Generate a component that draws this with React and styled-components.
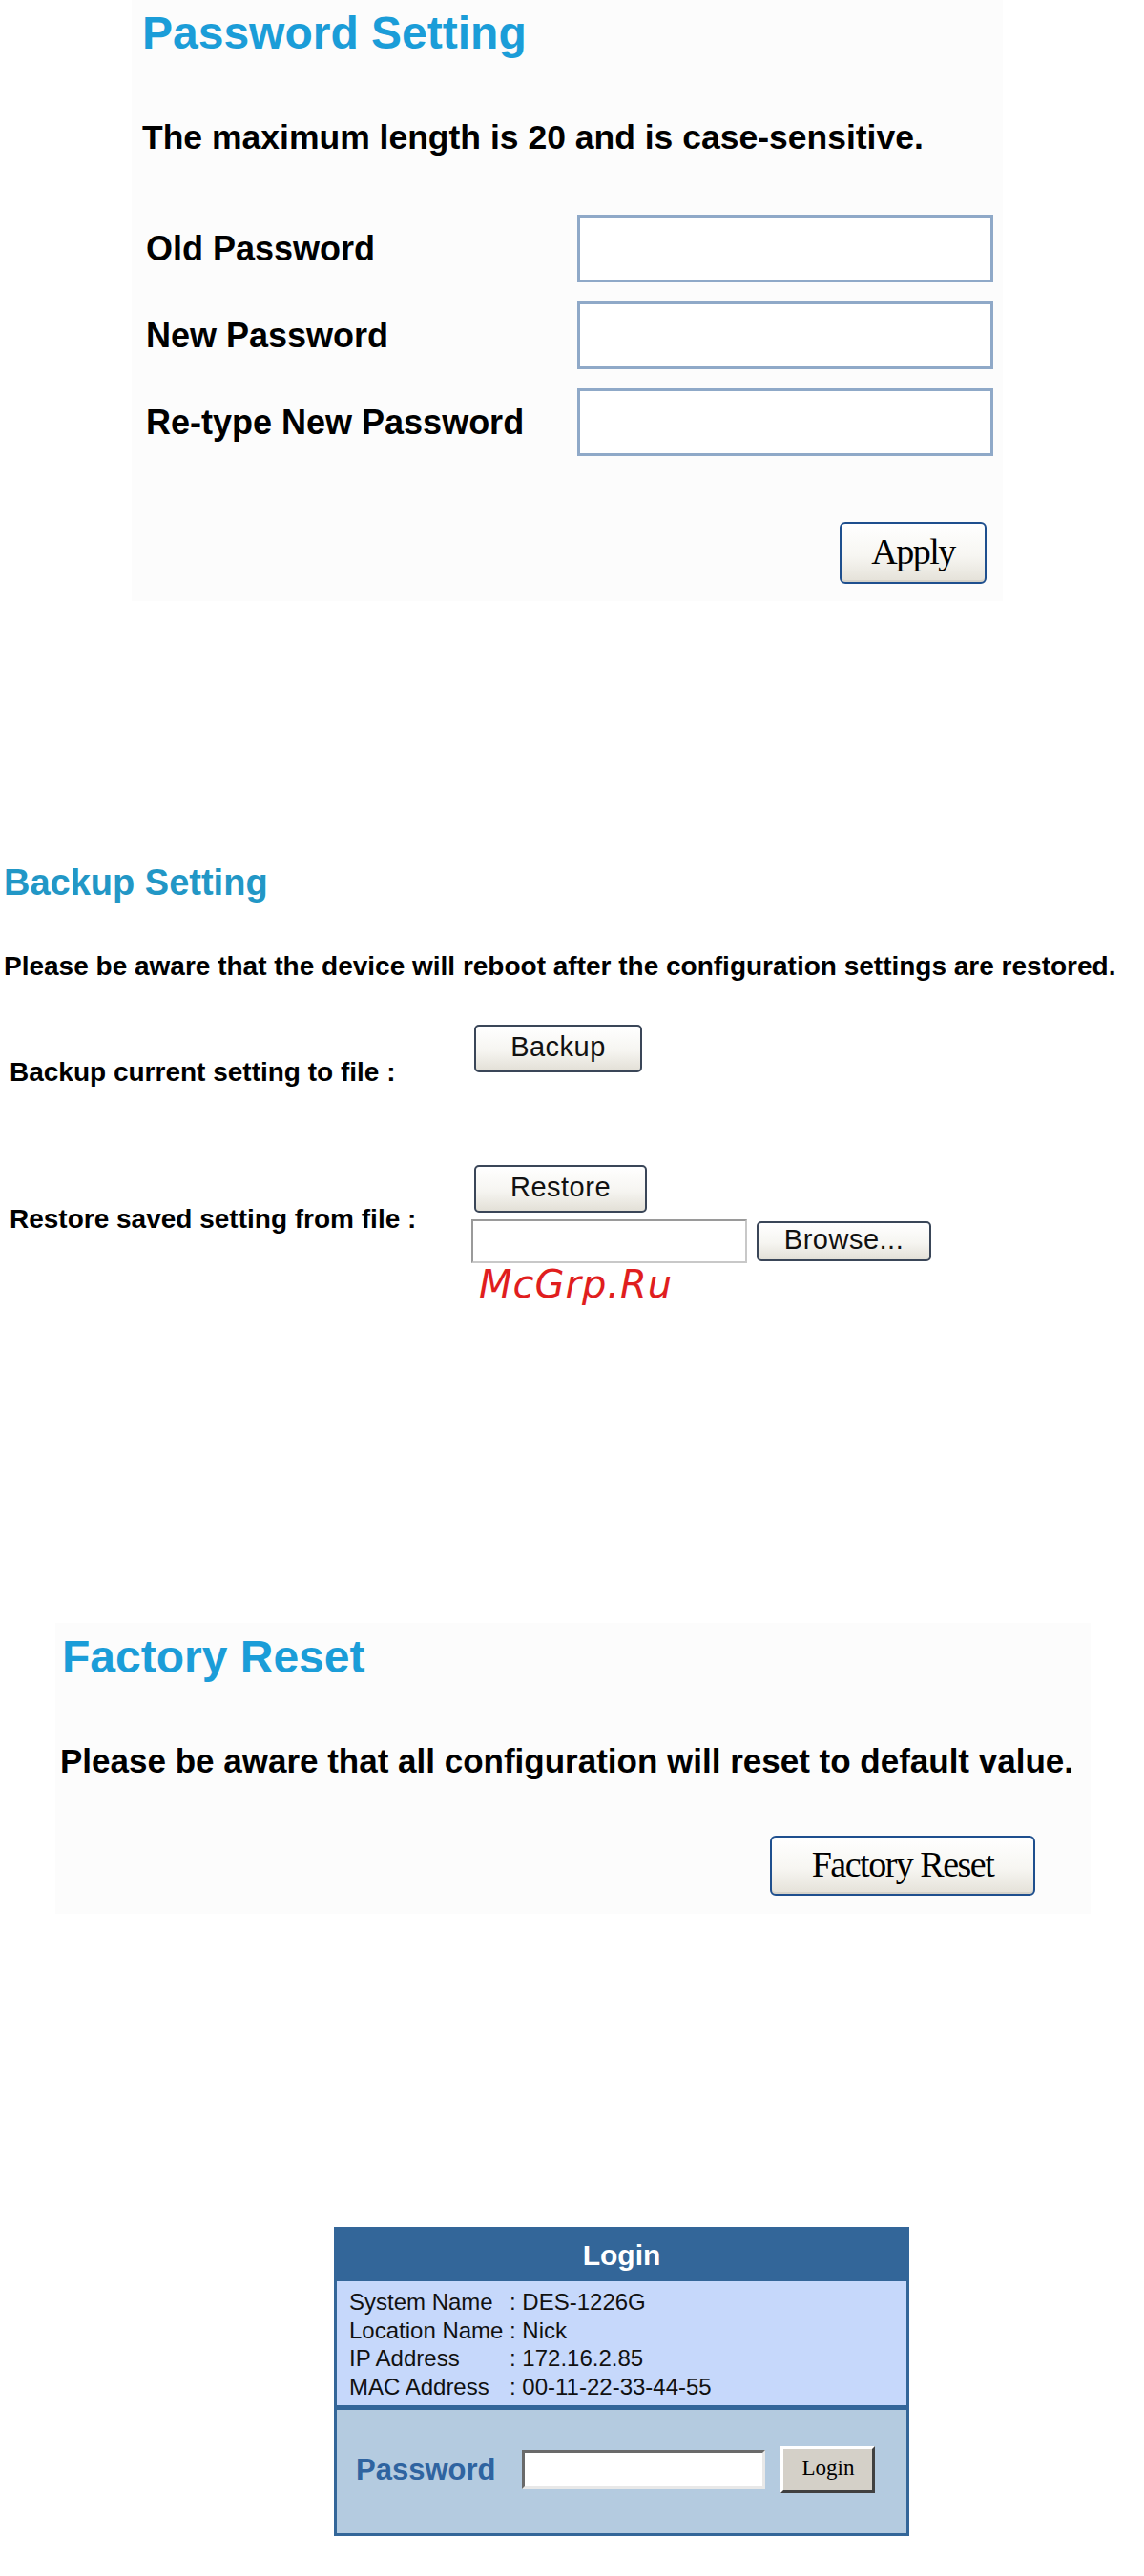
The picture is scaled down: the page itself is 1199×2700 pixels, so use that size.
import styled, { createGlobalStyle } from 'styled-components';

const GlobalStyle = createGlobalStyle`
  html, body {
    margin: 0;
    padding: 0;
    background: #fff;
  }
  body {
    font-family: "Liberation Sans", Arial, sans-serif;
    color: #000;
  }
`;

const Page = styled.div`
  display: flex;
  flex-direction: column;
  align-items: flex-start;
  min-height: 2700px;
`;

const Panel = styled.section`
  box-sizing: border-box;
  display: flex;
  flex-direction: column;
  width: ${(p) => p.$width}px;
  margin-left: ${(p) => p.$left}px;
  margin-top: ${(p) => p.$top || 0}px;
  padding: ${(p) => p.$pad};
  background: #fcfcfc;
`;

const Heading = styled.h2`
  margin: 0 0 0 ${(p) => p.$indent || 0}px;
  font-size: ${(p) => p.$size}px;
  line-height: ${(p) => p.$lh}px;
  font-weight: bold;
  color: ${(p) => p.$color || '#1b9dd8'};
`;

const Note = styled.p`
  margin: ${(p) => p.$gap}px 0 0;
  font-size: ${(p) => p.$size}px;
  line-height: ${(p) => p.$lh}px;
  font-weight: bold;
  white-space: nowrap;
`;

/* ---------- password setting ---------- */

const PasswordForm = styled.div`
  display: grid;
  grid-template-columns: 456px 436px;
  row-gap: 20px;
  margin-top: 59px;
`;

const FieldLabel = styled.label`
  align-self: center;
  padding-left: 4px;
  font-size: 36px;
  line-height: 44px;
  font-weight: bold;
`;

const BoxInput = styled.input`
  box-sizing: border-box;
  width: 436px;
  height: 71px;
  margin: 0;
  padding: 0 8px;
  border: 3px solid #8fa9c8;
  background: #fff;
  outline: none;
`;

const Actions = styled.div`
  display: flex;
  justify-content: flex-end;
  margin-top: ${(p) => p.$gap}px;
  padding-right: ${(p) => p.$right || 0}px;
`;

const GlossButton = styled.button`
  box-sizing: border-box;
  width: ${(p) => p.$w}px;
  height: ${(p) => p.$h}px;
  margin: 0;
  padding: 0 0 4px;
  border: 2px solid #1e4f8e;
  border-radius: 6px;
  background: linear-gradient(#ffffff 0%, #f7f6f2 55%, #e4e1d8 100%);
  box-shadow: inset 0 -2px 0 #d6d3ca;
  font-family: "Liberation Serif", "Times New Roman", serif;
  font-size: 38px;
  letter-spacing: -1.5px;
  color: #000;
`;

/* ---------- backup setting ---------- */

const BackupSection = styled.section`
  display: flex;
  flex-direction: column;
  margin-top: 273px;
  padding-left: 4px;
`;

const ConfigRow = styled.div`
  display: grid;
  grid-template-columns: 484px auto;
  align-items: start;
  margin-top: ${(p) => p.$gap}px;
  padding-left: 6px;
`;

const RowLabel = styled.span`
  margin-top: ${(p) => p.$drop}px;
  font-size: 28px;
  line-height: 34px;
  font-weight: bold;
  white-space: nowrap;
`;

const RowControls = styled.div`
  display: flex;
  flex-direction: column;
  align-items: flex-start;
`;

const PlainButton = styled.button`
  box-sizing: border-box;
  width: ${(p) => p.$w}px;
  height: ${(p) => p.$h}px;
  margin: 0 0 0 ${(p) => p.$shift || 0}px;
  padding: 0 0 3px;
  border: 2px solid #3a4658;
  border-radius: 5px;
  background: linear-gradient(#ffffff 0%, #f6f5f1 55%, #e3e0d7 100%);
  font-family: "Liberation Sans", Arial, sans-serif;
  font-size: 29px;
  letter-spacing: 0.5px;
  color: #111;
`;

const FileRow = styled.div`
  display: flex;
  align-items: center;
  gap: 10px;
  margin-top: 7px;
`;

const FileInput = styled.input`
  box-sizing: border-box;
  width: 289px;
  height: 46px;
  margin: 0;
  border: 2px solid #9a9a9a;
  border-right-color: #c8c8c8;
  border-bottom-color: #c8c8c8;
  background: #fff;
  outline: none;
`;

const Watermark = styled.div`
  margin: 0 0 0 8px;
  font-family: "DejaVu Sans", Verdana, sans-serif;
  font-style: italic;
  font-size: 40px;
  line-height: 44px;
  letter-spacing: 1px;
  color: #e01e1e;
`;

/* ---------- login ---------- */

const LoginBox = styled.section`
  box-sizing: border-box;
  width: 603px;
  margin: 328px 0 0 350px;
  border: 3px solid #336699;
  display: flex;
  flex-direction: column;
`;

const LoginHeader = styled.div`
  height: 54px;
  background: #336699;
  color: #fff;
  text-align: center;
  font-size: 30px;
  line-height: 54px;
  font-weight: bold;
`;

const InfoList = styled.div`
  padding: 7px 0 5px 13px;
  background: #c6d8fb;
`;

const InfoLine = styled.div`
  font-size: 24px;
  line-height: 29.6px;
  color: #111;
  white-space: nowrap;
`;

const InfoKey = styled.span`
  display: inline-block;
  width: 168px;
`;

const PasswordArea = styled.div`
  box-sizing: border-box;
  height: 134px;
  display: flex;
  align-items: flex-start;
  padding: 38px 0 0 20px;
  border-top: 5px solid #336699;
  background: #b4cbe0;
`;

const PasswordLabel = styled.span`
  margin: 0 28px 0 0;
  font-size: 31px;
  line-height: 49px;
  font-weight: bold;
  color: #2f64a0;
`;

const InsetInput = styled.input`
  box-sizing: border-box;
  width: 255px;
  height: 41px;
  margin: 4px 16px 0 0;
  border: 3px solid;
  border-color: #6a6a6a #e8e8e8 #e8e8e8 #6a6a6a;
  background: #fff;
  outline: none;
`;

const ClassicButton = styled.button`
  box-sizing: border-box;
  width: 99px;
  height: 49px;
  margin: 0;
  padding: 0 0 4px;
  border: 3px solid;
  border-color: #ffffff #404040 #404040 #ffffff;
  background: #d4d0c8;
  font-family: "Liberation Serif", "Times New Roman", serif;
  font-size: 23px;
  color: #000;
`;

const deviceInfo = [
  { key: 'System Name', value: 'DES-1226G' },
  { key: 'Location Name', value: 'Nick' },
  { key: 'IP Address', value: '172.16.2.85' },
  { key: 'MAC Address', value: '00-11-22-33-44-55' },
];

const passwordFields = ['Old Password', 'New Password', 'Re-type New Password'];

const App = () => {
  return (
    <>
      <GlobalStyle />
      <Page>
        <Panel $left={138} $width={913} $pad="7px 7px 18px 11px">
          <Heading $size={48} $lh={56}>Password Setting</Heading>
          <Note $gap={59} $size={35.5} $lh={44}>
            The maximum length is 20 and is case-sensitive.
          </Note>
          <PasswordForm>
            {passwordFields.map((field) => [
              <FieldLabel key={`${field}-label`}>{field}</FieldLabel>,
              <BoxInput key={`${field}-input`} type="password" />,
            ])}
          </PasswordForm>
          <Actions $gap={69} $right={10}>
            <GlossButton $w={154} $h={65}>Apply</GlossButton>
          </Actions>
        </Panel>

        <BackupSection>
          <Heading $size={38} $lh={44} $color="#2297c6">Backup Setting</Heading>
          <Note $gap={49} $size={28} $lh={34}>
            Please be aware that the device will reboot after the configuration settings are restored.
          </Note>
          <ConfigRow $gap={44}>
            <RowLabel $drop={33}>Backup current setting to file :</RowLabel>
            <RowControls>
              <PlainButton $w={176} $h={50} $shift={3}>Backup</PlainButton>
            </RowControls>
          </ConfigRow>
          <ConfigRow $gap={80}>
            <RowLabel $drop={40}>Restore saved setting from file :</RowLabel>
            <RowControls>
              <PlainButton $w={181} $h={50} $shift={3}>Restore</PlainButton>
              <FileRow>
                <FileInput type="text" />
                <PlainButton $w={183} $h={42}>Browse...</PlainButton>
              </FileRow>
              <Watermark>McGrp.Ru</Watermark>
            </RowControls>
          </ConfigRow>
        </BackupSection>

        <Panel $left={58} $width={1085} $top={333} $pad="8px 58px 19px 5px">
          <Heading $size={48} $lh={56} $indent={2}>Factory Reset</Heading>
          <Note $gap={59} $size={35} $lh={44}>
            Please be aware that all configuration will reset to default value.
          </Note>
          <Actions $gap={56}>
            <GlossButton $w={278} $h={63}>Factory Reset</GlossButton>
          </Actions>
        </Panel>

        <LoginBox>
          <LoginHeader>Login</LoginHeader>
          <InfoList>
            {deviceInfo.map((item) => (
              <InfoLine key={item.key}>
                <InfoKey>{item.key}</InfoKey>: {item.value}
              </InfoLine>
            ))}
          </InfoList>
          <PasswordArea>
            <PasswordLabel>Password</PasswordLabel>
            <InsetInput type="password" />
            <ClassicButton>Login</ClassicButton>
          </PasswordArea>
        </LoginBox>
      </Page>
    </>
  );
};

export default App;
